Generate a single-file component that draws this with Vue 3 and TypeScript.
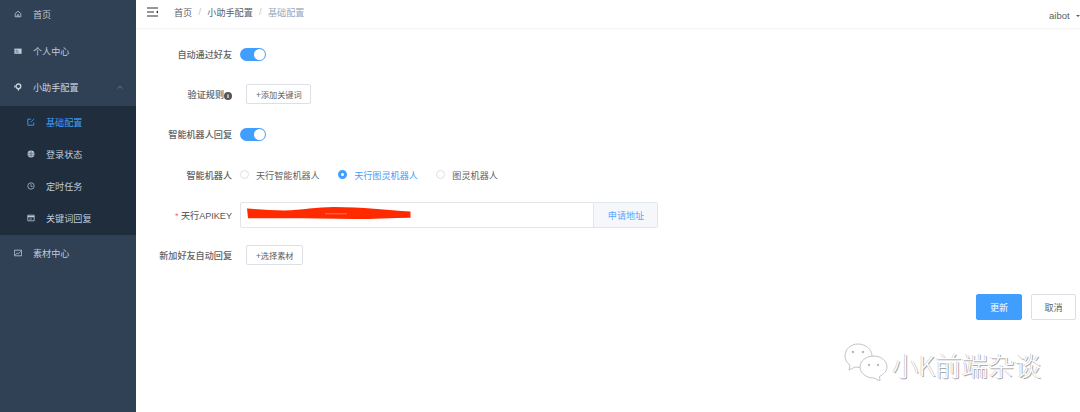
<script setup lang="ts">
const crumbs = ['首页', '小助手配置']
</script>

<template>
  <div class="app">
    <aside class="side">
      <div class="menu">
        <div class="item">
          <svg class="ic" viewBox="0 0 10 10"><path d="M1.500 4.500 5 1.500l3.500 3v4h-7zM4 8.500V6h2v2.500" fill="none" stroke="currentColor" stroke-width="1"/></svg>
          <span>首页</span>
        </div>
        <div class="item">
          <svg class="ic" viewBox="0 0 10 10"><path d="M.5 2h9v6.500h-9z" fill="currentColor"/><path d="M2 4.200h2.500M2 6.300h4" stroke="#304156" stroke-width=".8"/></svg>
          <span>个人中心</span>
        </div>
        <div class="item open">
          <svg class="ic" viewBox="0 0 10 10"><circle cx="5.500" cy="4.200" r="3" fill="none" stroke="currentColor" stroke-width="1.700"/><path d="M4.700 7v2.500h1.600V7z" fill="currentColor"/><path d="M.3 3h1.300v2.500H.3z" fill="currentColor"/></svg>
          <span>小助手配置</span>
          <svg class="chev" viewBox="0 0 6 4"><path d="M.5 3.500 3 1l2.500 2.500" fill="none" stroke="currentColor" stroke-width=".7"/></svg>
        </div>
        <div class="sub">
          <div class="subitem active">
            <svg class="ic" viewBox="0 0 10 10"><path d="M8.500 5.500V9H1V1.500H5" fill="none" stroke="currentColor" stroke-width="1.100"/><path d="M4.500 5.500 9 1" stroke="currentColor" stroke-width="1"/></svg>
            <span>基础配置</span>
          </div>
          <div class="subitem">
            <svg class="ic" viewBox="0 0 10 10"><circle cx="5" cy="5" r="4.300" fill="currentColor"/><path d="M1 4h8M1 6.500h8M5 .8v8.400" stroke="#1f2d3d" stroke-width=".6"/></svg>
            <span>登录状态</span>
          </div>
          <div class="subitem">
            <svg class="ic" viewBox="0 0 10 10"><circle cx="5" cy="5" r="4" fill="none" stroke="currentColor" stroke-width=".9"/><path d="M5 2.600V5.500H7.200" fill="none" stroke="currentColor" stroke-width=".8"/></svg>
            <span>定时任务</span>
          </div>
          <div class="subitem">
            <svg class="ic" viewBox="0 0 10 10"><path d="M1 1.500h8v7H1z" fill="none" stroke="currentColor" stroke-width="1"/><path d="M1 3.200h8" stroke="currentColor" stroke-width="1.800"/><path d="M3 6.200h3" stroke="currentColor" stroke-width="1"/></svg>
            <span>关键词回复</span>
          </div>
        </div>
        <div class="item">
          <svg class="ic" viewBox="0 0 10 10"><path d="M.5 1.500h9v7h-9z" fill="none" stroke="currentColor" stroke-width="1"/><path d="M1.500 7.500l2.500-2.500 1.300 1L8.500 3" fill="none" stroke="currentColor" stroke-width=".9"/></svg>
          <span>素材中心</span>
        </div>
      </div>
    </aside>

    <main class="main">
      <header class="top">
        <svg class="fold" viewBox="0 0 12 10"><path d="M0 1h11M0 5h7M0 9h11" stroke="#303133" stroke-width="1.200"/><path d="M11 3.400v3.200L9 5z" fill="#303133"/></svg>
        <nav class="crumbs">
          <template v-for="c in crumbs" :key="c">
            <span class="crumb">{{ c }}</span>
            <span class="sep">/</span>
          </template>
          <span class="crumb last">基础配置</span>
        </nav>
        <div class="user">aibot<i class="caret"></i></div>
      </header>

      <form class="form" @submit.prevent>
        <div class="row">
          <label class="label">自动通过好友</label>
          <span class="switch"><i></i></span>
        </div>
        <div class="row">
          <label class="label">验证规则<span class="info">i</span></label>
          <button class="small" type="button">+添加关键词</button>
        </div>
        <div class="row">
          <label class="label">智能机器人回复</label>
          <span class="switch"><i></i></span>
        </div>
        <div class="row">
          <label class="label">智能机器人</label>
          <div class="radios">
            <span class="radio"><i></i>天行智能机器人</span>
            <span class="radio on"><i></i>天行图灵机器人</span>
            <span class="radio"><i></i>图灵机器人</span>
          </div>
        </div>
        <div class="row">
          <label class="label"><em>*</em> 天行<span class="key">APIKEY</span></label>
          <div class="group">
            <div class="input">
              <svg class="scribble" viewBox="0 0 164 13" preserveAspectRatio="none"><path d="M0 1.500C12 2.500 25 3.500 37 3.500 55 3 70 0 87 0 115 0 140 3 163.500 4.500V10.700C145 11 125 12 107 12 85 12 60 11.300 37 11.300L1 11.300z" fill="#ff2a00"/><path d="M78 6.800h22" stroke="#ffb09c" stroke-width=".6"/></svg>
            </div>
            <span class="append">申请地址</span>
          </div>
        </div>
        <div class="row">
          <label class="label">新加好友自动回复</label>
          <button class="small" type="button">+选择素材</button>
        </div>
        <div class="actions">
          <button class="btn primary" type="button">更新</button>
          <button class="btn" type="button">取消</button>
        </div>
      </form>

      <div class="mark">
        <svg class="chat" viewBox="0 0 44 38"><g fill="#fff" stroke="#c4c4c4" stroke-width="1"><path d="M14 1C7 1 1 6 1 13c0 4 2 7 5 9l-1 5 6-3 6 .5C25 24 28 18 28 13 28 6 21 1 14 1z"/><path d="M30 13c-8 0-14 5-14 11s6 11 14 11l6 3-.5-4.500C40 31 43 28 43 24c0-6-6-11-13-11z"/></g><g fill="#bbb"><circle cx="9" cy="9" r="1.300"/><circle cx="19" cy="9" r="1.300"/><circle cx="25" cy="22" r="1.200"/><circle cx="34" cy="22" r="1.200"/></g></svg>
        <span class="mark-text">小K前端杂谈</span>
      </div>
    </main>
  </div>
</template>

<style>
html, body { margin: 0; background: #fff; overflow: hidden; }
</style>

<style scoped>
.app {
  display: flex;
  width: 1080px;
  height: 412px;
  overflow: hidden;
  font-family: "Liberation Sans", "Noto Sans CJK SC", sans-serif;
  font-size: 9.100px;
  color: #606266;
}
.side { width: 136px; flex: none; background: #304156; overflow: hidden; color: #bfcbd9; }
.menu { margin-top: -4px; }
.item { height: 36.500px; display: flex; align-items: center; padding-left: 14px; position: relative; }
.item.open { color: #c9d3de; }
.ic { width: 8px; height: 8px; margin-right: 11px; flex: none; }
.chev { width: 6px; height: 4px; position: absolute; left: 117px; top: 16px; color: #7d8ea1; }
.sub { background: #1f2d3d; padding-bottom: 1px; }
.subitem { height: 32px; display: flex; align-items: center; padding-left: 27px; }
.subitem.active { color: #409eff; }
.main { flex: 1; position: relative; min-width: 0; }
.top {
  height: 28px;
  display: flex;
  align-items: center;
  padding: 0 0 4px 11px;
  box-shadow: 0 1px 2px rgba(0, 21, 41, .06);
  box-sizing: border-box;
}
.fold { width: 12px; height: 10px; margin-right: 15px; }
.crumbs { display: flex; align-items: center; }
.crumb { color: #5a5e66; }
.crumb.last { color: #97a8be; }
.sep { margin: 0 6.300px; color: #c0c4cc; }
.user { margin-left: auto; width: 31px; color: #5a5e66; display: flex; align-items: center; font-size: 9.500px; position: relative; top: 3px; }
.caret { margin-left: 6px; border: 2px solid transparent; border-top: 2.500px solid #5a5e66; margin-top: 3px; }
.form { padding-top: 6px; }
.row { height: 40.200px; display: flex; align-items: center; }
.label { width: 96px; text-align: right; margin-right: 8px; flex: none; font-weight: 500; }
.label em { color: #f56c6c; font-style: normal; }
.key { color: #54575c; }
.info {
  display: inline-block; width: 8px; height: 8px; line-height: 8px; border-radius: 50%;
  background: #555; color: #fff; font-size: 6.500px; text-align: center; font-weight: 700;
  vertical-align: 0; font-family: "Liberation Serif", serif;
}
.switch { width: 26px; height: 13px; border-radius: 7px; background: #409eff; position: relative; display: block; }
.switch i { position: absolute; right: 1px; top: 1px; width: 11px; height: 11px; border-radius: 50%; background: #fff; }
.small {
  margin-left: 6px; height: 20px; padding: 0 8px 0 9px; background: #fff; border: 1px solid #dcdfe6;
  border-radius: 2px; color: #606266; font: inherit; font-size: 8.200px;
}
.radios { display: flex; }
.radio { display: flex; align-items: center; margin-right: 18.500px; }
.radio i { width: 9px; height: 9px; border: 1px solid #dcdfe6; border-radius: 50%; margin-right: 7px; box-sizing: border-box; background: #fff; }
.radio.on { color: #409eff; }
.radio.on i { border: 3px solid #409eff; }
.group { display: flex; width: 418px; height: 26px; border: 1px solid #e2e5ea; border-radius: 2px; box-sizing: border-box; }
.input { flex: 1; position: relative; }
.scribble { position: absolute; left: 6px; top: 4px; width: 164px; height: 13px; }
.append { width: 62px; padding-left: 1px; background: #f5f7fa; border-left: 1px solid #e2e5ea; color: #56a9ff; display: flex; align-items: center; justify-content: center; }
.actions { display: flex; justify-content: flex-end; gap: 9px; padding: 19px 4px 0 0; }
.btn { width: 45px; height: 26px; padding: 0; border: 1px solid #dcdfe6; background: #fff; border-radius: 2px; color: #606266; font: inherit; }
.btn.primary { background: #409eff; border-color: #409eff; color: #fff; width: 46px; }
.mark { position: absolute; left: 708px; top: 343px; display: flex; align-items: center; }
.chat { width: 44px; height: 38px; }
.mark-text {
  font-family: "Noto Sans CJK SC", sans-serif;
  font-size: 26.500px; color: #fff; margin-left: 4px; line-height: 30px; margin-top: 5px;
  text-shadow: 1px 1px 0 #aaa, -0.500px -0.500px 0 #bbb;
  font-weight: 300;
}
</style>
